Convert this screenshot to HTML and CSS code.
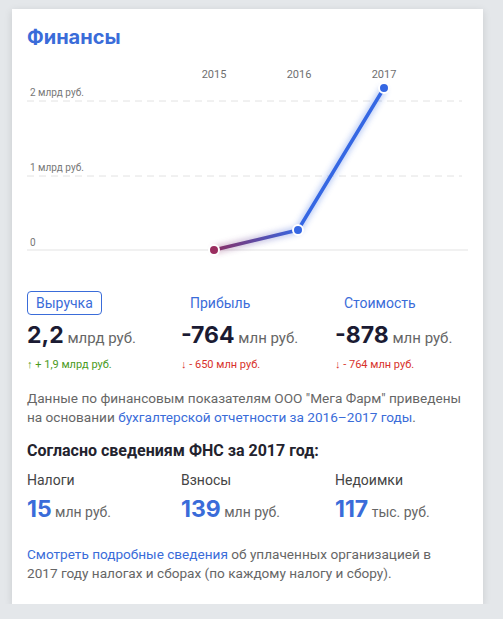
FILE: index.html
```html
<!DOCTYPE html>
<html lang="ru">
<head>
<meta charset="utf-8">
<link rel="stylesheet" href="styles.css">
</head>
<body>
<div class="card">
  <h2 class="title">Финансы</h2>
  <svg class="chart" width="441" height="200" viewBox="0 0 441 200">
    <defs>
      <linearGradient id="lg" gradientUnits="userSpaceOnUse" x1="187" y1="0" x2="271" y2="0">
        <stop offset="0" stop-color="#8a2d63"/>
        <stop offset="1" stop-color="#3567e3"/>
      </linearGradient>
      <filter id="glow" x="-20%" y="-20%" width="140%" height="140%">
        <feGaussianBlur stdDeviation="3"/>
      </filter>
    </defs>
    <text class="yr" x="187" y="18" text-anchor="middle">2015</text>
    <text class="yr" x="272" y="18" text-anchor="middle">2016</text>
    <text class="yr" x="357" y="18" text-anchor="middle">2017</text>
    <text class="ax" x="3" y="36">2 млрд руб.</text>
    <line x1="0" y1="41" x2="435" y2="41" stroke="#e2e2e2" stroke-width="1" stroke-dasharray="7 5"/>
    <text class="ax" x="3" y="111">1 млрд руб.</text>
    <line x1="0" y1="116" x2="435" y2="116" stroke="#e2e2e2" stroke-width="1" stroke-dasharray="7 5"/>
    <text class="ax" x="3" y="186">0</text>
    <line x1="0" y1="190" x2="441" y2="190" stroke="#e3e3e3" stroke-width="1"/>
    <polyline points="187,190 271,170 357,28" fill="none" stroke="url(#lg)" stroke-width="6" stroke-linejoin="round" opacity="0.4" filter="url(#glow)"/>
    <polyline points="187,190 271,170 357,28" fill="none" stroke="url(#lg)" stroke-width="3.5" stroke-linejoin="round"/>
    <circle cx="187" cy="190" r="5" fill="#9a2d5f" stroke="#fff" stroke-width="2"/>
    <circle cx="271" cy="170" r="5" fill="#3567e3" stroke="#fff" stroke-width="2"/>
    <circle cx="357" cy="28" r="5" fill="#3567e3" stroke="#fff" stroke-width="2"/>
  </svg>

  <div class="metrics">
    <div class="metric">
      <span class="tab active">Выручка</span>
      <div class="value"><b>2,2</b> млрд руб.</div>
      <div class="delta up">↑ + 1,9 млрд руб.</div>
    </div>
    <div class="metric">
      <span class="tab">Прибыль</span>
      <div class="value"><b>-764</b> млн руб.</div>
      <div class="delta down">↓ - 650 млн руб.</div>
    </div>
    <div class="metric">
      <span class="tab">Стоимость</span>
      <div class="value"><b>-878</b> млн руб.</div>
      <div class="delta down">↓ - 764 млн руб.</div>
    </div>
  </div>

  <p class="note">Данные по финансовым показателям ООО "Мега Фарм" приведены на основании <a href="#">бухгалтерской отчетности за 2016–2017 годы</a>.</p>

  <h3 class="sub">Согласно сведениям ФНС за 2017 год:</h3>

  <div class="taxes">
    <div class="tax">
      <div class="tax-label">Налоги</div>
      <div class="tax-value"><b>15</b> млн руб.</div>
    </div>
    <div class="tax">
      <div class="tax-label">Взносы</div>
      <div class="tax-value"><b>139</b> млн руб.</div>
    </div>
    <div class="tax">
      <div class="tax-label">Недоимки</div>
      <div class="tax-value"><b>117</b> тыс. руб.</div>
    </div>
  </div>

  <p class="note bottom"><a href="#">Смотреть подробные сведения</a> об уплаченных организацией в 2017 году налогах и сборах (по каждому налогу и сбору).</p>
</div>
</body>
</html>
```

FILE: styles.css
```css
html, body {
  margin: 0;
  padding: 0;
}
body {
  background: #e4e7ea;
  font-family: Roboto, "Noto Sans", sans-serif;
  color: #555;
  padding: 9px 0 0 12px;
}
.card {
  box-sizing: border-box;
  width: 471px;
  height: 595px;
  background: #fff;
  padding: 16px 15px 0 15px;
  box-shadow: 0 2px 8px rgba(0, 0, 0, 0.12);
}
.title {
  margin: 0;
  font-family: Inter, Roboto, sans-serif;
  font-size: 20px;
  font-weight: 700;
  line-height: 24px;
  color: #3a6cd9;
}
.chart {
  display: block;
  margin-top: 11px;
}
.yr {
  font-family: Roboto, sans-serif;
  font-size: 11px;
  fill: #6f6f6f;
}
.ax {
  font-family: Roboto, sans-serif;
  font-size: 10px;
  fill: #777;
}
.metrics {
  display: flex;
  margin-top: 31px;
}
.metric {
  flex: 0 0 154px;
}
.tab {
  display: inline-block;
  box-sizing: border-box;
  height: 24px;
  line-height: 22px;
  padding: 0 8px;
  border: 1px solid transparent;
  border-radius: 4px;
  font-size: 14px;
  color: #3a6cd9;
}
.tab.active {
  border-color: #3a6cd9;
}
.value {
  margin-top: 7px;
  font-size: 15px;
  line-height: 26px;
  color: #666;
}
.value b {
  font-family: Inter, Roboto, sans-serif;
  font-size: 23px;
  font-weight: 700;
  color: #1b1b33;
}
.delta {
  margin-top: 7px;
  font-size: 11px;
  line-height: 14px;
}
.delta.up { color: #4a9a1c; }
.delta.down { color: #d8322c; }
.note {
  margin: 17px 0 0;
  max-width: 436px;
  font-size: 13.6px;
  line-height: 19px;
  color: #666;
}
.note a {
  color: #3a6cd9;
  text-decoration: none;
}
.sub {
  margin: 14px 0 0;
  font-size: 16px;
  font-weight: 700;
  line-height: 20px;
  color: #23232e;
}
.taxes {
  display: flex;
  margin-top: 10px;
}
.tax {
  flex: 0 0 154px;
}
.tax-label {
  font-size: 14px;
  line-height: 18px;
  color: #444;
}
.tax-value {
  margin-top: 8px;
  font-size: 14px;
  line-height: 24px;
  color: #666;
}
.tax-value b {
  font-family: Inter, Roboto, sans-serif;
  font-size: 23px;
  font-weight: 700;
  color: #3a6cd9;
}
.note.bottom {
  margin-top: 21px;
}
```
